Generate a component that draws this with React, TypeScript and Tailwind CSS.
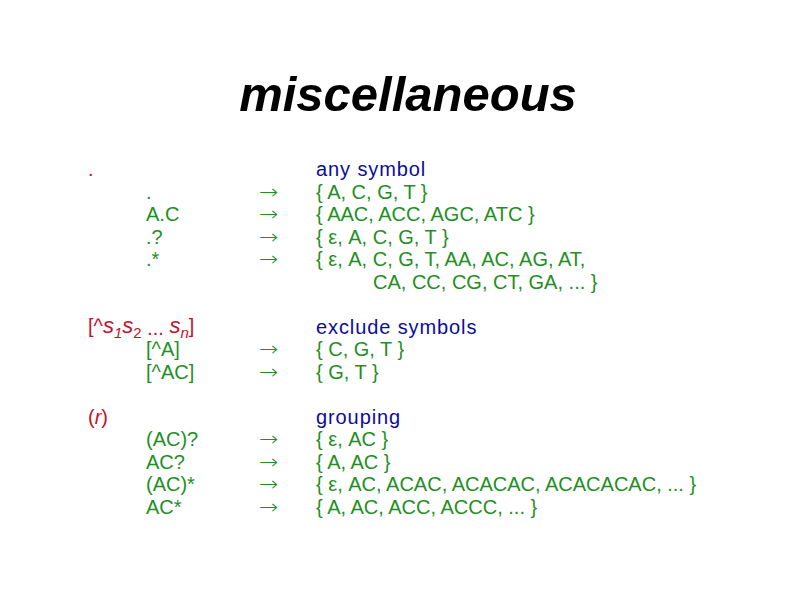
import React from "react";

const G = "text-[#1f8f1f]";
const B = "text-[#0c0c9c] tracking-[0.9px]";
const R = "text-[#c4102a]";

function Arrow() {
  return (
    <span
      className={`${G} inline-block font-extralight text-[20px] scale-x-[1.15] origin-left`}
      style={{ fontFamily: '"DejaVu Sans", sans-serif' }}
    >
      →
    </span>
  );
}

type Row = {
  a?: React.ReactNode;
  b?: React.ReactNode;
  c?: React.ReactNode;
  d?: React.ReactNode;
};

const rows: Row[] = [
  { a: <span className={R}>.</span>, d: <span className={B}>any symbol</span> },
  { b: ".", c: <Arrow />, d: "{ A, C, G, T }" },
  { b: "A.C", c: <Arrow />, d: "{ AAC, ACC, AGC, ATC }" },
  { b: ".?", c: <Arrow />, d: "{ ε, A, C, G, T }" },
  { b: ".*", c: <Arrow />, d: "{ ε, A, C, G, T, AA, AC, AG, AT," },
  { d: <span className="pl-[57px]">{"CA, CC, CG, CT, GA, ... }"}</span> },
  {},
  {
    a: (
      <span className={`${R} relative -top-[1px]`}>
        [^<i className="text-[22px]">s</i>
        <sub className="text-[15px] relative top-[5px] align-baseline"><i>1</i></sub>
        <i className="text-[22px]">s</i>
        <sub className="text-[15px] relative top-[5px] align-baseline">2</sub>
        <span className="relative top-[2px]"> ... </span>
        <i className="text-[22px]">s</i>
        <sub className="text-[15px] relative top-[5px] align-baseline"><i>n</i></sub>]
      </span>
    ),
    d: <span className={B}>exclude symbols</span>,
  },
  { b: "[^A]", c: <Arrow />, d: "{ C, G, T }" },
  { b: "[^AC]", c: <Arrow />, d: "{ G, T }" },
  {},
  {
    a: (
      <span className={R}>
        (<i>r</i>)
      </span>
    ),
    d: <span className={B}>grouping</span>,
  },
  { b: "(AC)?", c: <Arrow />, d: "{ ε, AC }" },
  { b: "AC?", c: <Arrow />, d: "{ A, AC }" },
  { b: "(AC)*", c: <Arrow />, d: "{ ε, AC, ACAC, ACACAC, ACACACAC, ... }" },
  { b: "AC*", c: <Arrow />, d: "{ A, AC, ACC, ACCC, ... }" },
];

export default function App() {
  return (
    <div
      className="w-[794px] h-[595px] bg-white overflow-hidden"
      style={{ fontFamily: '"Liberation Sans", Arial, "DejaVu Sans", sans-serif' }}
    >
      <div className="pt-[70px] pl-[22px] text-center text-[49px] leading-[48px] font-bold italic text-black">
        miscellaneous
      </div>
      <div className="mt-[40px] pl-[88px] flex flex-col text-[20px] leading-[22.5px]">
        {rows.map((r, i) => (
          <div key={i} className={`grid grid-cols-[58px_113px_57px_1fr] h-[22.5px] whitespace-nowrap ${G}`}>
            <div className="overflow-visible">{r.a}</div>
            <div>{r.b}</div>
            <div>{r.c}</div>
            <div>{r.d}</div>
          </div>
        ))}
      </div>
    </div>
  );
}
